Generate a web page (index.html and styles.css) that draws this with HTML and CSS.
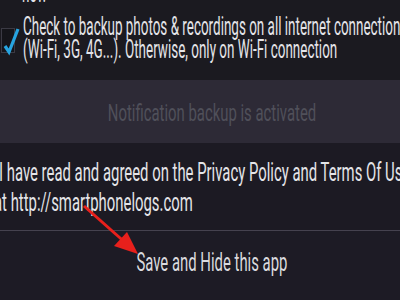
FILE: index.html
```html
<!DOCTYPE html>
<html>
<head>
<meta charset="utf-8">
<link rel="stylesheet" href="styles.css">
</head>
<body>
<div class="screen">
  <section class="top">
    <div class="line prev"><span class="sx">now</span></div>
    <div class="check-row">
      <div class="checkbox">
        <svg class="tick" width="22" height="30" viewBox="0 0 22 30">
          <path d="M4 19 L8 25 L17 2" fill="none" stroke="#27a4e0" stroke-width="3.2"/>
        </svg>
      </div>
      <div class="check-text">
        <div class="line"><span class="sx">Check to backup photos &amp; recordings on all internet connections</span></div>
        <div class="line"><span class="sx">(Wi-Fi, 3G, 4G...). Otherwise, only on Wi-Fi connection</span></div>
      </div>
    </div>
  </section>
  <section class="band">
    <div class="line center"><span class="sx">Notification backup is activated</span></div>
  </section>
  <section class="agree">
    <div class="line l1"><span class="sx">I have read and agreed on the Privacy Policy and Terms Of Use</span></div>
    <div class="line l2"><span class="sx">at http://smartphonelogs.com</span></div>
  </section>
  <section class="save">
    <div class="line center"><span class="sx">Save and Hide this app</span></div>
  </section>
  <svg class="arrow" width="400" height="300" viewBox="0 0 400 300">
    <line x1="84" y1="206" x2="128" y2="245" stroke="#e8201c" stroke-width="3"/>
    <polygon points="138,254 114,246 127,232" fill="#e8201c"/>
  </svg>
</div>
</body>
</html>
```
FILE: styles.css
```css
html, body {
  margin: 0;
  padding: 0;
  background: #1b1a20;
  overflow: hidden;
}
.screen {
  position: relative;
  width: 400px;
  height: 300px;
  overflow: hidden;
  font-family: Roboto, "Liberation Sans", sans-serif;
  font-size: 24px;
  color: #e4e4e8;
}
.line {
  line-height: 23px;
  height: 23px;
  white-space: nowrap;
}
.sx {
  display: inline-block;
  transform: scaleX(0.62);
  transform-origin: 0 0;
}
.center {
  text-align: center;
}
.center .sx {
  transform-origin: 50% 0;
}
.top {
  display: flow-root;
  height: 80px;
  background: #1b1a20;
  font-size: 25px;
}
.top .sx {
  transform: scaleX(0.538);
}
.prev {
  margin-top: -18px;
  padding-left: 22px;
}
.check-row {
  display: flex;
  margin-top: 10px;
}
.checkbox {
  position: relative;
  box-sizing: border-box;
  width: 14px;
  height: 25px;
  margin: 13px 8px 0 1px;
  border: 1px solid #3b3a44;
  background: #15151a;
  flex: none;
}
.tick {
  position: absolute;
  left: -1px;
  top: -2px;
}
.band {
  height: 63px;
  background: #2d2a36;
  box-sizing: border-box;
  padding: 22px 0 0 24px;
  color: #50505a;
}
.agree {
  height: 88px;
  box-sizing: border-box;
  padding-top: 18px;
  background: #1c1a23;
  border-bottom: 1px solid #45424f;
  font-size: 25px;
}
.agree .sx {
  transform: scaleX(0.595);
}
.agree .l1 {
  margin-left: -1px;
  margin-bottom: 7px;
}
.agree .l2 {
  margin-left: -6px;
}
.save {
  height: 69px;
  background: #1d1b25;
  box-sizing: border-box;
  padding: 20px 0 0 24px;
  color: #dadade;
  font-size: 26px;
}
.save .sx {
  transform: scaleX(0.572);
}
.arrow {
  position: absolute;
  left: 0;
  top: 0;
  pointer-events: none;
}
```
